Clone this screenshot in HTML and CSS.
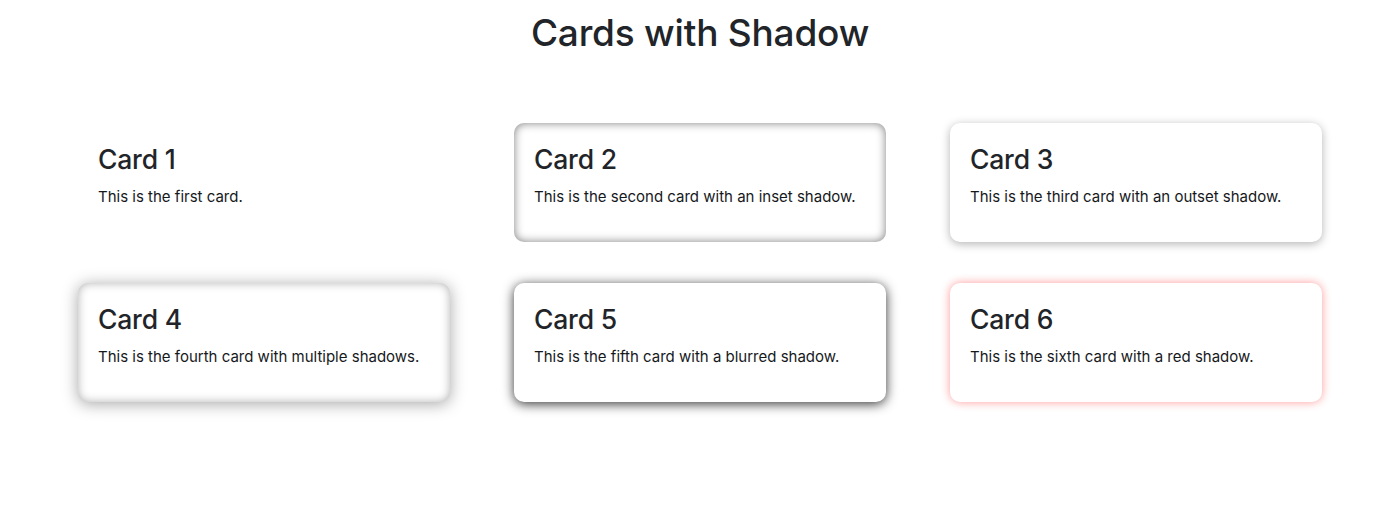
FILE: index.html
```html
<!DOCTYPE html>
<html lang="en">
<head>
<meta charset="utf-8">
<title>Cards with Shadow</title>
<link rel="stylesheet" href="styles.css">
</head>
<body>
<main class="page">
  <h1 class="title">Cards with Shadow</h1>
  <section class="grid">
    <div class="card">
      <h3 class="card-title">Card 1</h3>
      <p class="card-text">This is the first card.</p>
    </div>
    <div class="card card-inset">
      <h3 class="card-title">Card 2</h3>
      <p class="card-text">This is the second card with an inset shadow.</p>
    </div>
    <div class="card card-outset">
      <h3 class="card-title">Card 3</h3>
      <p class="card-text">This is the third card with an outset shadow.</p>
    </div>
    <div class="card card-multi">
      <h3 class="card-title">Card 4</h3>
      <p class="card-text">This is the fourth card with multiple shadows.</p>
    </div>
    <div class="card card-blur">
      <h3 class="card-title">Card 5</h3>
      <p class="card-text">This is the fifth card with a blurred shadow.</p>
    </div>
    <div class="card card-red">
      <h3 class="card-title">Card 6</h3>
      <p class="card-text">This is the sixth card with a red shadow.</p>
    </div>
  </section>
</main>
</body>
</html>
```
FILE: styles.css
```css
* { box-sizing: border-box; }
html, body { margin: 0; padding: 0; }
body {
  background: #fff;
  color: #212529;
  font-family: Inter, "Noto Sans", "Liberation Sans", sans-serif;
  font-size: 15px;
  line-height: 1.5;
}
.page {
  display: flex;
  flex-direction: column;
  align-items: center;
  min-height: 514px;
  padding-top: 11px;
}
.title {
  margin: 0;
  font-size: 37px;
  font-weight: 500;
  line-height: 1.2;
  letter-spacing: -0.2px;
}
.grid {
  margin-top: 68px;
  display: grid;
  grid-template-columns: repeat(3, 372px);
  column-gap: 64px;
  row-gap: 41px;
}
.card {
  height: 119px;
  padding: 21px 19px 21px 20px;
  border-radius: 10px;
  background: #fff;
}
.card-title {
  margin: 0 0 10px;
  font-size: 26.5px;
  font-weight: 500;
  line-height: 1.2;
  letter-spacing: -0.2px;
}
.card-text {
  margin: 0;
  color: #16191c;
}
.card-inset { box-shadow: inset 0 0 10px rgba(0, 0, 0, 0.5); }
.card-outset { box-shadow: 0 2px 10px rgba(0, 0, 0, 0.3); }
.card-multi { box-shadow: 0 2px 16px rgba(0, 0, 0, 0.35), inset 0 0 10px rgba(0, 0, 0, 0.3); }
.card-blur { box-shadow: 0 2px 12px rgba(0, 0, 0, 0.8); }
.card-red { box-shadow: 0 0 10px rgba(255, 0, 0, 0.4); }
```
